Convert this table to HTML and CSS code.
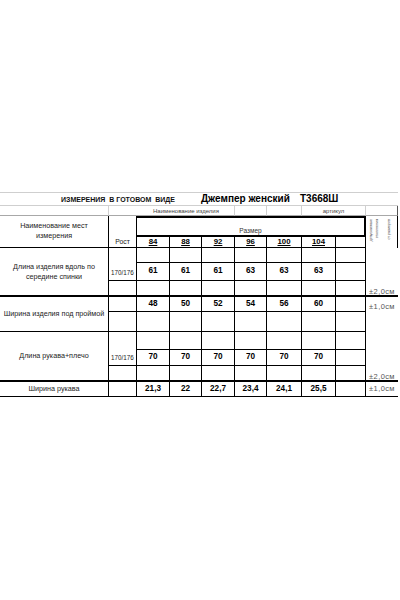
FILE: index.html
```html
<!DOCTYPE html>
<html lang="ru">
<head>
<meta charset="utf-8">
<title>Измерения в готовом виде</title>
<link rel="stylesheet" href="styles.css">
</head>
<body>
<div class="sheet">
  <div class="grid">
    <!-- row 1: title -->
    <div class="title">
      <span class="t1">ИЗМЕРЕНИЯ  В ГОТОВОМ  ВИДЕ</span>
      <span class="t2">Джемпер женский</span>
      <span class="t3">Т3668Ш</span>
    </div>
    <!-- row 2: subtitle -->
    <div class="sub"></div>
    <div class="sub sub-name">Наименование изделия</div>
    <div class="sub"></div>
    <div class="sub"></div>
    <div class="sub sub-art">артикул</div>
    <div class="sub sub-last"></div>
    <!-- row 3-4: header -->
    <div class="cell name hname">Наименование мест<br>измерения</div>
    <div class="cell rost-h">Рост</div>
    <div class="cell razmer">Размер</div>
    <div class="tolh">
      <span class="vt">допускаемые</span>
      <span class="vt">отклонения</span>
      <span class="vt vt3">от размеров</span>
    </div>
    <div class="cell size">84</div>
    <div class="cell size">88</div>
    <div class="cell size">92</div>
    <div class="cell size">96</div>
    <div class="cell size">100</div>
    <div class="cell size">104</div>
    <div class="cell size"></div>

    <!-- group 1 -->
    <div class="cell name span3 thick">Длина изделия вдоль по<br>середине спинки</div>
    <div class="cell rost span2">170/176</div>
    <div class="cell"></div><div class="cell"></div><div class="cell"></div><div class="cell"></div><div class="cell"></div><div class="cell"></div><div class="cell"></div>
    <div class="tol span3 thick end"><span>±2,0см</span></div>
    <div class="cell val">61</div><div class="cell val">61</div><div class="cell val">61</div><div class="cell val">63</div><div class="cell val">63</div><div class="cell val">63</div><div class="cell val"></div>
    <div class="cell thick"></div>
    <div class="cell thick"></div><div class="cell thick"></div><div class="cell thick"></div><div class="cell thick"></div><div class="cell thick"></div><div class="cell thick"></div><div class="cell thick"></div>

    <!-- group 2 -->
    <div class="cell name span2">Ширина изделия под проймой</div>
    <div class="cell"></div>
    <div class="cell val">48</div><div class="cell val">50</div><div class="cell val">52</div><div class="cell val">54</div><div class="cell val">56</div><div class="cell val">60</div><div class="cell val"></div>
    <div class="tol span5 thick split"><span>±1,0см</span><span>±2,0см</span></div>
    <div class="cell"></div>
    <div class="cell"></div><div class="cell"></div><div class="cell"></div><div class="cell"></div><div class="cell"></div><div class="cell"></div><div class="cell"></div>

    <!-- group 3 -->
    <div class="cell name span3 thick">Длина рукава+плечо</div>
    <div class="cell rost span2">170/176</div>
    <div class="cell"></div><div class="cell"></div><div class="cell"></div><div class="cell"></div><div class="cell"></div><div class="cell"></div><div class="cell"></div>
    <div class="cell val">70</div><div class="cell val">70</div><div class="cell val">70</div><div class="cell val">70</div><div class="cell val">70</div><div class="cell val">70</div><div class="cell val"></div>
    <div class="cell thick"></div>
    <div class="cell thick"></div><div class="cell thick"></div><div class="cell thick"></div><div class="cell thick"></div><div class="cell thick"></div><div class="cell thick"></div><div class="cell thick"></div>

    <!-- group 4 -->
    <div class="cell name">Ширина рукава</div>
    <div class="cell"></div>
    <div class="cell val">21,3</div><div class="cell val">22</div><div class="cell val">22,7</div><div class="cell val">23,4</div><div class="cell val">24,1</div><div class="cell val">25,5</div><div class="cell val"></div>
    <div class="tol tol-last"><span>±1,0см</span></div>
  </div>
</div>
</body>
</html>
```

FILE: styles.css
```css
html, body {
  margin: 0;
  padding: 0;
  background: #fff;
}

body {
  width: 400px;
  height: 600px;
  font-family: "Liberation Sans", Arial, sans-serif;
  color: #000;
}

.sheet {
  padding-top: 192px;
}

.grid {
  display: grid;
  grid-template-columns: 109px 28px 33px 32px 33px 32px 35px 34px 30px 32px;
  grid-template-rows: 14px 10px 21px 11px 15px 18px 16px 15px 20px 18px 16px 16px 15px;
}

.grid > div {
  box-sizing: border-box;
  min-width: 0;
  min-height: 0;
}

/* title row */
.title {
  grid-column: 1 / -1;
  border-top: 1px solid #cfcfcf;
  border-bottom: 1px solid #cfcfcf;
  display: flex;
  align-items: center;
  font-weight: bold;
  white-space: pre;
  line-height: 1;
}

.t1 {
  box-sizing: border-box;
  width: 201px;
  padding-left: 61px;
  font-size: 7px;
  color: #111;
}

.t2 {
  width: 99px;
  font-size: 10px;
}

.t3 {
  font-size: 10px;
}

/* subtitle row */
.sub {
  border-right: 1px solid #d0d0d0;
  border-bottom: 1px solid #a8a8a8;
  display: flex;
  align-items: center;
  font-size: 6px;
  line-height: 1;
  color: #444;
  white-space: nowrap;
}

.sub-name {
  grid-column: span 4;
  padding-left: 44px;
}

.sub-art {
  grid-column: span 2;
  justify-content: center;
}

.sub-last {
  border-right-color: #555;
}

/* generic cell */
.cell {
  border-right: 1px solid #000;
  border-bottom: 1px solid #000;
  display: flex;
  align-items: center;
  justify-content: center;
  text-align: center;
  line-height: 1;
  white-space: nowrap;
}

.thick {
  border-bottom-width: 2px;
}

.span2 {
  grid-row: span 2;
}

.span3 {
  grid-row: span 3;
}

.span5 {
  grid-row: span 5;
}

.name {
  font-size: 7.2px;
  line-height: 10px;
  color: #1c1c1c;
}

.hname {
  grid-row: span 2;
  padding-bottom: 2px;
}

.rost-h {
  grid-row: span 2;
  align-items: flex-end;
  padding-bottom: 1px;
  font-size: 6.8px;
  color: #222;
}

.razmer {
  grid-column: span 7;
  border-top: 2px solid #000;
  border-right-width: 2px;
  border-bottom-width: 2px;
  align-items: flex-end;
  padding-bottom: 1px;
  font-size: 6.5px;
  color: #333;
}

.tolh {
  grid-row: span 2;
  border-right: 1px solid #000;
  display: flex;
  align-items: flex-start;
  padding: 3px 0 0 4px;
  gap: 2px;
}

.vt {
  writing-mode: vertical-rl;
  transform: rotate(180deg);
  font-size: 3.6px;
  line-height: 1;
  color: #333;
  white-space: nowrap;
}

.vt3 {
  margin-left: 7px;
}

.size {
  font-size: 7.8px;
  font-weight: bold;
  text-decoration: underline;
}

.val {
  font-size: 8.2px;
  font-weight: bold;
}

.rost {
  align-items: flex-end;
  padding-bottom: 4px;
  font-size: 6.3px;
  color: #222;
}

/* tolerance column */
.tol {
  border-bottom: 1px solid #000;
  display: flex;
  flex-direction: column;
  align-items: center;
  font-size: 7.5px;
  line-height: 1;
  letter-spacing: 0.4px;
  color: #555;
  white-space: nowrap;
}

.tol.thick {
  border-bottom-width: 2px;
}

.end {
  justify-content: flex-end;
}

.split {
  justify-content: space-between;
  padding-top: 6px;
}

.tol-last {
  justify-content: center;
}
```
